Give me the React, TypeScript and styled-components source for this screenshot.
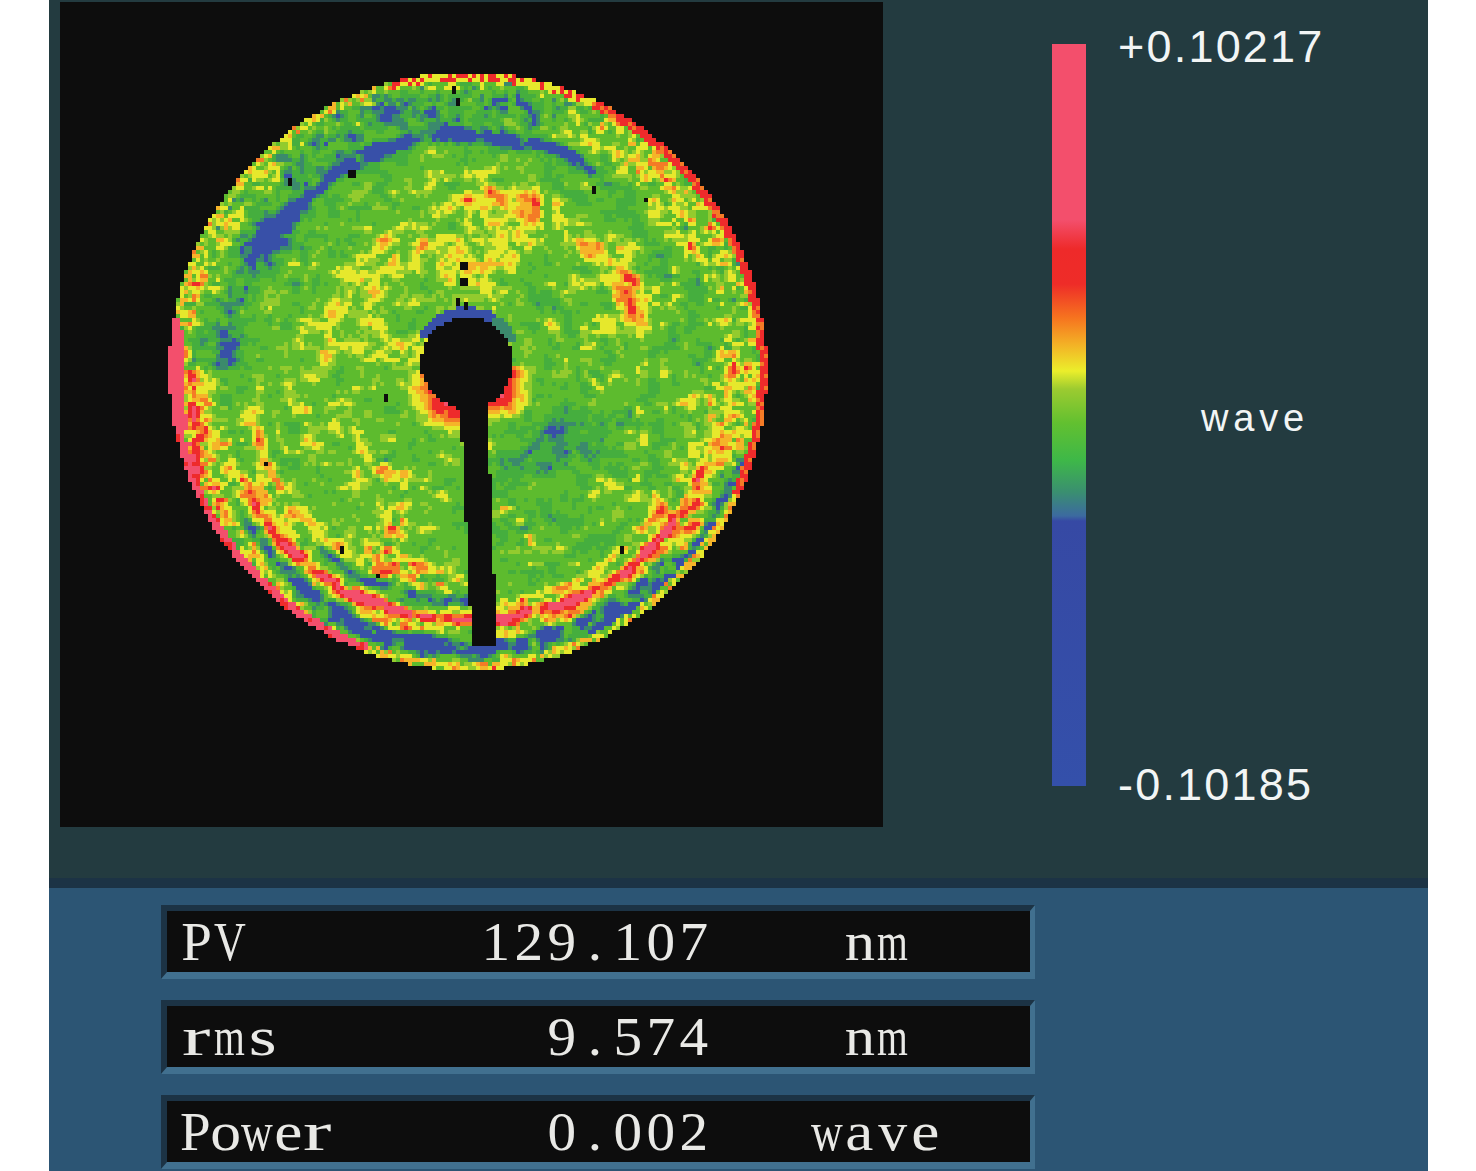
import React, { useMemo } from 'react';
import styled, { createGlobalStyle } from 'styled-components';

const PALETTE = [
	'#3850a8', // blue
	'#3b8a6c', // teal
	'#45ae3e', // green dark
	'#5dbb2e', // green
	'#93cb2e', // lime
	'#e6e82c', // yellow
	'#f5b429', // amber
	'#f47b26', // orange
	'#ee2b2b', // red
	'#f34f6c', // pink
];
const LEVELS = [-0.56, -0.36, -0.1, 0.19, 0.3, 0.5, 0.66, 0.84, 1.22];

// arc features of the map: r centre, r width, angle from, angle to, strength
const ARCS: number[][] = [
	[0.79, 0.024, -150, -65, -1.2],
	[0.8, 0.06, -178, -145, -0.7],
	[0.9, 0.07, -135, -70, -0.4],
	[0.6, 0.06, -85, -18, 0.66],
	[0.4, 0.2, -170, -70, 0.34],
	[0.5, 0.2, 100, 175, 0.14],
	[0.36, 0.1, 15, 70, -0.3],
	[0.9, 0.09, -70, 35, 0.22],
	[0.85, 0.017, 28, 65, 1.5],
	[0.835, 0.018, 65, 115, 1.5],
	[0.84, 0.026, 115, 148, 1.15],
	[0.79, 0.016, 30, 150, 0.55],
	[0.885, 0.016, 30, 115, 0.6],
	[0.925, 0.028, 52, 128, -1.3],
	[0.965, 0.018, 25, 60, -1],
	[0.775, 0.02, 90, 128, -1.05],
	[0.895, 0.022, 120, 148, -0.95],
	[0.92, 0.06, 125, 178, 0.6],
	[0.74, 0.03, 120, 165, 0.5],
	[0.94, 0.03, 160, 180, 0.4],
	[0.95, 0.03, -180, -150, 0.3],
];

const SPECKS = [
	[288, 180], [350, 172], [592, 188], [644, 198], [462, 264], [462, 280], [384, 396],
	[264, 462], [340, 548], [376, 574], [620, 548], [456, 300], [464, 304], [452, 88], [456, 100],
];

const GLYPH_WIDTH = 33;
const SQUEEZE: Record<string, number> = { m: 0.72, w: 0.8, V: 0.8, P: 1, a: 1.15, v: 1.05, e: 1.15, r: 1.55, s: 1.3, n: 1.1, o: 1.12 };

function hash(x: number, y: number) {
	const s = Math.sin(x * 127.1 + y * 311.7) * 43758.5453;
	return s - Math.floor(s);
}

function noise(x: number, y: number) {
	const ix = Math.floor(x);
	const iy = Math.floor(y);
	const fx = x - ix;
	const fy = y - iy;
	const u = fx * fx * (3 - 2 * fx);
	const w = fy * fy * (3 - 2 * fy);
	const a = hash(ix, iy) + (hash(ix + 1, iy) - hash(ix, iy)) * u;
	const b = hash(ix, iy + 1) + (hash(ix + 1, iy + 1) - hash(ix, iy + 1)) * u;
	return (a + (b - a) * w) * 2 - 1;
}

function fieldValue(px: number, py: number, r: number, deg: number) {
	const rad = (deg * Math.PI) / 180;
	const seam = Math.min(1, (180 - Math.abs(deg)) / 25);
	const wobble = noise(px / 30, py / 30) * 0.012;
	const fine = noise(px / 9, py / 7);
	const fine2 = noise(px / 6 + 11, py / 5 + 5);
	const blob = noise(px / 26 + 40, py / 20 + 9);
	const arc = noise((r * 299) / 11 + 7, (rad * r * 299) / 34 + 3) * seam;
	const speck = hash(px / 4 + 0.3, py / 4 + 0.7) * 2 - 1;
	let v = 0.0 + 0.2 * fine + 0.13 * fine2 + 0.14 * blob + 0.18 * arc + 0.07 * speck;
	// spiral streaks, strongest on the lower half
	const streak = noise(rad * 9 + r * 5 + 20, r * 7 + 4);
	if (deg > 60 && r < 0.75) v += Math.max(0, streak) * 0.6 * (0.5 + fine) * seam;
	if (deg < 40 && deg > -40 && r > 0.3) v += Math.max(0, streak) * 0.35 * (0.5 + fine);
	const busy = Math.max(0, (r - 0.74) * 2.4);
	v += busy * (0.1 + 0.7 * fine2);
	for (const [r0, w, a0, a1, amp] of ARCS) {
		if (deg < a0 - 12 || deg > a1 + 12) continue;
		const d = (r + wobble - r0) / w;
		const edge = Math.min(1, Math.min(deg - a0, a1 - deg) / 12 + 1);
		v += amp * Math.exp(-d * d) * edge * (0.78 + 0.6 * noise(px / 11, py / 11));
	}
	return v;
}

function buildMap() {
	const cx = 408;
	const cy = 369;
	const R = 299;
	const holeX = 407;
	const holeY = 361;
	const cells: Record<string, string> = {};
	const add = (c: string, x: number, y: number) => {
		cells[c] = (cells[c] || '') + `M${x} ${y}h4v4h-4z`;
	};
	for (let y = 68; y < 672; y += 4) {
		for (let x = 104; x < 712; x += 4) {
			const dx = x + 2 - cx;
			const dy = y + 2 - cy;
			const d = Math.hypot(dx, dy);
			if (d > R) continue;
			const hx = x + 2 - holeX;
			const hy = y + 2 - holeY;
			const rh = Math.hypot(hx, hy);
			if (rh < 46) continue;
			const t = (y + 2 - 400) / 243;
			if (t > 0 && t < 1 && x + 2 > 400 + t * 12 && x + 2 < 427 + t * 10) continue;
			if (SPECKS.some(([sx, sy]) => Math.abs(sx - 60 - x) < 3 && Math.abs(sy - 2 - y) < 3)) continue;

			const r = d / R;
			const deg = (Math.atan2(dy, dx) * 180) / Math.PI;
			let v = fieldValue(x, y, r, deg);
			const speck = hash(x / 4 + 3.1, y / 4 + 1.9);

			// hole rim
			const hdeg = (Math.atan2(hy, hx) * 180) / Math.PI;
			const patchy = 0.2 * noise(x / 7, y / 7);
			if (rh < 56 && hdeg > -150 && hdeg < -60) v = -1;
			if (rh < 56 && hdeg >= -60 && hdeg < -25) v = -0.45;
			if (rh < 78 && hdeg > 65 && hdeg < 170) v = Math.max(v, 1.2 + patchy - (rh - 46) / 30 - Math.abs(hdeg - 112) / 110);
			if (rh < 76 && hdeg > 5 && hdeg < 65) v = Math.max(v, 1.3 + patchy - (rh - 46) / 26 - Math.abs(hdeg - 42) / 70);

			// outer rim
			if (r > 0.972) {
				const left = deg > 165 || deg < -170;
				const lowerLeft = deg > 110 && deg <= 165;
				const upperRight = deg > -65 && deg < -25;
				const right = deg > -25 && deg < 25;
				const top = deg > -105 && deg < -65;
				if (left || lowerLeft) v = speck > 0.2 ? 1.3 : 1;
				else if (upperRight || right) v = speck > 0.25 ? 1 : 0.8;
				else if (top) v = speck > 0.6 ? 1 : 0.4;
				else v = Math.max(v, -0.05 + speck * 0.75);
			}
			if (r > 0.955 && (deg > 168 || deg < -172)) v = 1.3;

			let idx = LEVELS.findIndex((l) => v < l);
			if (idx < 0) idx = PALETTE.length - 1;
			add(PALETTE[idx], x, y);
		}
	}
	return cells;
}

const ROWS = [
	{ name: 'PV', value: '129.107', unit: 'nm' },
	{ name: 'rms', value: '9.574', unit: 'nm' },
	{ name: 'Power', value: '0.002', unit: 'wave' },
];

function CellText({ text }: { text: string }) {
	return (
		<>
			{text.split('').map((ch, i) => (
				<Cell key={i}>
					<CellGlyph $squeeze={SQUEEZE[ch] ?? 1.04}>{ch}</CellGlyph>
				</Cell>
			))}
		</>
	);
}

export default function App() {
	const cells = useMemo(buildMap, []);
	return (
		<>
			<GlobalStyle />
			<Window>
				<MapPanel>
					<MapView>
						<MapSvg viewBox="0 0 823 825" shapeRendering="crispEdges">
							{Object.entries(cells).map(([color, d]) => (
								<path key={color} d={d} fill={color} />
							))}
						</MapSvg>
					</MapView>
					<ScaleBar />
					<ScaleLabels>
						<ScaleValue>+0.10217</ScaleValue>
						<ScaleUnit>wave</ScaleUnit>
						<ScaleValue>-0.10185</ScaleValue>
					</ScaleLabels>
				</MapPanel>
				<StatsPanel>
					{ROWS.map((row) => (
						<StatRow key={row.name}>
							<StatName>
								<CellText text={row.name} />
							</StatName>
							<StatValue>
								<CellText text={row.value} />
							</StatValue>
							<StatUnit>
								<CellText text={row.unit} />
							</StatUnit>
						</StatRow>
					))}
				</StatsPanel>
			</Window>
		</>
	);
}

const GlobalStyle = createGlobalStyle`
	html, body {
		margin: 0;
		background: #ffffff;
	}
`;

const Window = styled.div`
	width: 1379px;
	height: 1171px;
	margin-left: 49px;
	overflow: hidden;
	display: flex;
	flex-direction: column;
`;

const MapPanel = styled.div`
	height: 878px;
	box-sizing: border-box;
	padding: 2px 0 0 11px;
	background: #233b40;
	display: flex;
	align-items: flex-start;
`;

const MapView = styled.div`
	width: 823px;
	height: 825px;
	background: #0d0d0d;
`;

const MapSvg = styled.svg`
	display: block;
	width: 100%;
	height: 100%;
	filter: blur(0.5px);
`;

const ScaleBar = styled.div`
	width: 34px;
	height: 742px;
	margin: 42px 0 0 169px;
	background: linear-gradient(
		180deg,
		#f34f6c 0,
		#f34f6c 176px,
		#ee2a2a 205px,
		#ee2c28 240px,
		#f6741f 274px,
		#f3b026 300px,
		#ebee2b 327px,
		#9ccb30 345px,
		#62c030 379px,
		#3eb848 416px,
		#3a8f70 448px,
		#3c6aa0 472px,
		#3649a4 477px,
		#3450aa 742px
	);
`;

const ScaleLabels = styled.div`
	width: 230px;
	height: 788px;
	margin: 20px 0 0 32px;
	display: flex;
	flex-direction: column;
	justify-content: space-between;
	color: #f2f5f5;
	font-family: 'Liberation Sans', Arial, sans-serif;
`;

const ScaleValue = styled.div`
	font-size: 45px;
	line-height: 50px;
	letter-spacing: 2.2px;
`;

const ScaleUnit = styled.div`
	padding: 3px 0 0 83px;
	font-size: 38px;
	line-height: 44px;
	letter-spacing: 4.8px;
`;

const StatsPanel = styled.div`
	flex: 1;
	border-top: 10px solid #1c3345;
	background: #2c5574;
	padding: 17px 0 0 112px;
	display: flex;
	flex-direction: column;
	gap: 21px;
`;

const StatRow = styled.div`
	width: 874px;
	height: 74px;
	box-sizing: border-box;
	border-style: solid;
	border-width: 6px 5px 7px 6px;
	border-color: #1c3345 #41708f #41708f #1c3345;
	background: #0d0d0d;
	padding-left: 15px;
	display: grid;
	grid-template-columns: 150px 378px 272px;
	align-items: center;
	color: #e9e9e6;
	font-family: 'Liberation Serif', 'Times New Roman', serif;
	font-size: 55px;
	line-height: 60px;
`;

const StatName = styled.span`
	display: flex;
	margin-left: -2px;
`;

const StatValue = styled.span`
	display: flex;
	justify-content: flex-end;
`;

const StatUnit = styled.span`
	display: flex;
	justify-content: center;
	margin-left: 60px;
`;

const Cell = styled.span`
	display: inline-flex;
	justify-content: center;
	width: ${GLYPH_WIDTH}px;
`;

const CellGlyph = styled.span<{ $squeeze: number }>`
	display: inline-block;
	transform: scaleX(${(p) => p.$squeeze});
`;
